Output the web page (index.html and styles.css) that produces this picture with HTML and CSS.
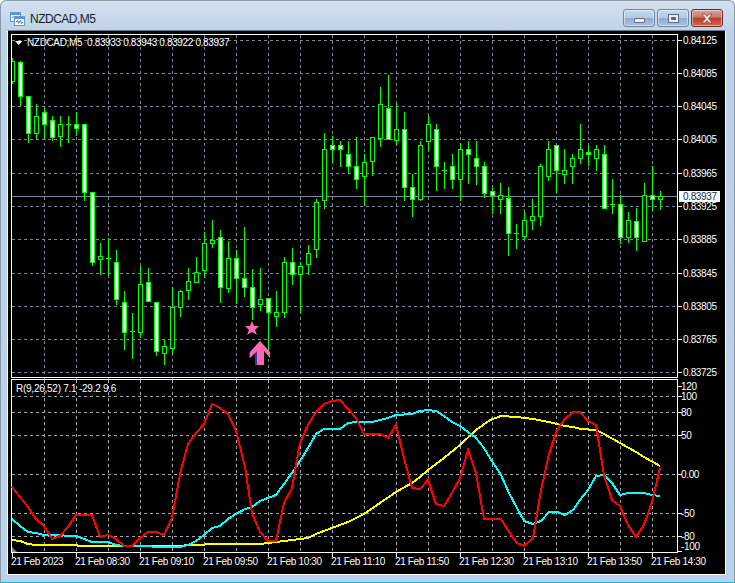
FILE: index.html
```html
<!DOCTYPE html>
<html>
<head>
	<meta charset="utf-8" />
	<title>NZDCAD,M5</title>
	<link rel="stylesheet" href="styles.css">
</head>
<body>
	<div class="window">
		<div class="titlebar">
			<svg class="app-icon" width="15" height="14" viewBox="0 0 15 14">
				<rect x="0.5" y="0.5" width="10" height="9" fill="#e8f1fb" stroke="#6f96c8"/>
				<rect x="1" y="1" width="9" height="2" fill="#5b93d6"/>
				<path d="M2 6l2-2 2 2" fill="none" stroke="#7a9cc8"/>
				<rect x="4.500" y="4.500" width="10" height="9" fill="#f4f8fd" stroke="#6f96c8"/>
				<rect x="5" y="5" width="9" height="2" fill="#5b93d6"/>
				<path d="M6 10l1.500-1.500 1 3 2-3 1 3 1.500-1.500" fill="none" stroke="#4a78b5"/>
			</svg>
			<span class="title">NZDCAD,M5</span>
			<div class="buttons">
				<div class="btn btn-min"><span class="glyph-min"></span></div>
				<div class="btn btn-max"><span class="glyph-max"></span></div>
				<div class="btn btn-close">
					<svg width="14" height="11" viewBox="0 0 14 11">
						<path d="M2 1h3l2 2.500 2-2.500h3l-3.500 4.500 3.500 4.500h-3l-2-2.500-2 2.500h-3l3.500-4.500z" fill="#f4ecea" stroke="#7a3a30" stroke-width="0.7"/>
					</svg>
				</div>
			</div>
		</div>
		<div class="client">
			<svg id="chart" class="chart" width="716" height="543" viewBox="8 31 716 543">
				<g id="grid"></g>
				<g id="frames"></g>
				<g id="candles"></g>
				<polygon class="marker" points="252,321 254,326 259,326 255,330 257,335 252,332 247,335 249,330 245,326 250,326"/>
				<polygon class="marker-shadow" points="260,341 249,353 249,358 255,353 255,365 258,365 258,350"/>
				<polygon class="marker" points="260,341 270,352 270,358 264,351 264,365 257,365 257,351 250,358 250,352"/>
				<g id="lines"></g>

				<polygon class="legend-mark" points="15,41 22.500,41 18.700,45"/>
				<text class="label" x="27" y="46">NZDCAD,M5&#160; 0.83933 0.83943 0.83922 0.83937</text>
				<text class="label label-wide" x="16" y="392">R(9,26,52) 7.1 -29.2 9.6</text>

				<text class="label" x="683" y="44">0.84125</text>
				<text class="label" x="683" y="77">0.84085</text>
				<text class="label" x="683" y="110">0.84045</text>
				<text class="label" x="683" y="143">0.84005</text>
				<text class="label" x="683" y="177">0.83965</text>
				<text class="label" x="683" y="210">0.83925</text>
				<text class="label" x="683" y="243">0.83885</text>
				<text class="label" x="683" y="277">0.83845</text>
				<text class="label" x="683" y="310">0.83805</text>
				<text class="label" x="683" y="343">0.83765</text>
				<text class="label" x="683" y="376">0.83725</text>

				<rect class="price-tag" x="679" y="191" width="41" height="11"/>
				<text class="label price-text" x="683" y="200">0.83937</text>

				<text class="label" x="681" y="390">120</text>
				<text class="label" x="681" y="400">100</text>
				<text class="label" x="681" y="416">80</text>
				<text class="label" x="681" y="439">50</text>
				<text class="label" x="681" y="478">0.00</text>
				<text class="label" x="681" y="517">-50</text>
				<text class="label" x="681" y="540">-80</text>
				<text class="label" x="681" y="550">-100</text>

				<text class="label" x="11" y="565">21 Feb 2023</text>
				<text class="label" x="75" y="565">21 Feb 08:30</text>
				<text class="label" x="139" y="565">21 Feb 09:10</text>
				<text class="label" x="203" y="565">21 Feb 09:50</text>
				<text class="label" x="267" y="565">21 Feb 10:30</text>
				<text class="label" x="331" y="565">21 Feb 11:10</text>
				<text class="label" x="395" y="565">21 Feb 11:50</text>
				<text class="label" x="459" y="565">21 Feb 12:30</text>
				<text class="label" x="523" y="565">21 Feb 13:10</text>
				<text class="label" x="587" y="565">21 Feb 13:50</text>
				<text class="label" x="651" y="565">21 Feb 14:30</text>
			</svg>
		</div>
	</div>
	<script src="script.js"></script>
</body>
</html>
```
FILE: styles.css
```css
html, body{margin:0;padding:0;background:#fff;}
body{width:735px;height:583px;overflow:hidden;}

.window{
	display:flex;
	flex-direction:column;
	width:733px;
	height:581px;
	border:1px solid #8a9aa8;
	border-bottom-color:#1fb6c8;
	border-radius:6px 6px 0 0;
	background:linear-gradient(to bottom, #d3e1ee 0, #bdd3e9 30px, #b9d1ea 100%);
}
.titlebar{
	display:flex;
	align-items:center;
	flex:none;
	height:29px;
	padding:0 11px 0 9px;
}
.app-icon{flex:none;margin-top:7px;}
.title{
	margin-left:5px;
	margin-top:6px;
	font-family:"Liberation Sans", Arial, sans-serif;
	font-size:12px;
	letter-spacing:-0.5px;
	color:#1a1a2a;
}
.buttons{
	display:flex;
	gap:2px;
	margin-left:auto;
	margin-top:5px;
}
.btn{
	display:flex;
	align-items:center;
	justify-content:center;
	box-sizing:border-box;
	width:32px;
	height:18px;
	border:1px solid #71859e;
	border-radius:3px;
	box-shadow:inset 0 0 0 1px rgba(255,255,255,0.45);
	background:linear-gradient(to bottom, #c5d8ec 0, #b2cae3 50%, #8fadcf 52%, #a9c4e0 100%);
}
.btn-close{
	border-color:#6e2a24;
	background:linear-gradient(to bottom, #d9a49a 0, #c8776a 45%, #b83c2c 52%, #cf6a58 100%);
}
.glyph-min{
	display:block;
	width:11px;
	height:5px;
	margin-top:4px;
	box-sizing:border-box;
	border:1px solid #5a6a80;
	border-radius:1px;
	background:#eef2f6;
}
.glyph-max{
	display:block;
	width:11px;
	height:9px;
	box-sizing:border-box;
	border:1px solid #5a6a80;
	box-shadow:inset 0 0 0 2px #eef2f6;
	background:#5a6a80;
}
.client{
	flex:none;
	margin:0 8px 0 6px;
	height:543px;
	border-top:1px solid #6a7a8a;
	border-left:1px solid #fff;
	border-right:1px solid #fff;
	border-bottom:1px solid #fff;
	background:#000;
}
.chart{display:block;}

.label{
	font-family:"Liberation Sans", Arial, sans-serif;
	font-size:10px;
	letter-spacing:-0.35px;
	fill:#fff;
}
.label-wide{letter-spacing:-0.25px;}
.price-tag{fill:#fff;}
.price-text{fill:#1a2a4a;}
.legend-mark{fill:#fff;}
.marker{fill:#ff69b4;}
.marker-shadow{fill:#3a3a9a;}
```
FILE: script.js
```js
var NS = 'http://www.w3.org/2000/svg';

// high, low, body top, body bottom, filled (1) or hollow (0); x = 12 + 8 * index
var bars = [
	[58,83,61,81,0],[61,105,62,96,1],[96,142,96,133,1],[104,139,116,133,0],[108,139,112,124,1],
	[116,140,120,137,1],[116,146,124,136,0],[116,142,124,124,0],[112,135,124,128,1],[124,200,124,192,1],
	[192,265,192,262,1],[243,274,256,259,0],[238,275,258,258,0],[250,304,262,299,1],[291,349,302,332,1],
	[313,358,331,331,0],[266,337,284,332,0],[268,301,282,301,1],[302,355,302,351,1],[340,364,346,353,0],
	[287,353,307,348,0],[290,316,291,307,0],[268,299,281,290,0],[257,282,272,282,0],[232,277,243,270,0],
	[220,247,240,243,0],[230,302,237,287,1],[241,292,258,288,0],[250,303,258,278,1],[227,296,278,287,1],
	[269,319,287,307,1],[268,310,299,304,0],[298,351,298,312,1],[291,326,312,316,0],[257,317,262,312,0],
	[248,284,262,274,1],[262,312,266,274,0],[245,274,253,264,0],[199,257,202,249,0],[133,208,149,200,0],
	[136,162,145,149,1],[141,166,145,149,1],[141,173,154,166,1],[137,188,166,179,1],[154,205,162,176,0],
	[137,175,137,161,0],[87,146,104,138,0],[75,139,108,139,1],[104,144,129,140,0],[112,200,129,187,1],
	[174,216,187,199,1],[141,200,145,199,0],[116,150,124,141,0],[124,190,129,166,1],[162,188,170,170,0],
	[154,188,166,179,1],[143,200,149,179,0],[141,183,149,154,1],[141,184,158,166,1],[162,197,166,193,1],
	[187,213,191,195,1],[183,213,195,199,0],[187,255,198,233,1],[224,248,233,233,0],[212,239,220,236,0],
	[199,229,216,220,0],[164,225,166,216,0],[141,180,149,176,0],[145,192,145,170,1],[149,183,170,174,0],
	[154,183,158,166,0],[124,163,149,158,0],[145,165,152,154,1],[145,170,149,158,0],[145,208,154,208,1],
	[179,213,204,204,0],[195,243,204,237,1],[212,242,220,237,0],[208,250,221,237,1],[183,241,195,241,0],
	[166,210,195,199,1],[191,209,196,199,0]
];

// indicator lines: x, y in page pixels
var red = [[12,487],[20,497],[28,507],[36,519],[44,526],[52,539],[60,536],[68,527],[76,515],[92,515],[100,537],[108,535],[116,539],[124,546],[132,546],[140,538],[148,532],[156,532],[164,535],[172,518],[180,474],[188,444],[196,433],[204,424],[212,404],[220,408],[228,414],[236,431],[245,467],[252,513],[260,532],[268,541],[276,541],[284,503],[292,488],[300,443],[308,425],[316,412],[324,404],[332,401],[340,400],[348,409],[356,418],[364,434],[380,434],[388,438],[396,425],[404,458],[412,488],[420,489],[428,480],[436,504],[444,506],[452,493],[460,478],[468,450],[476,473],[484,519],[501,519],[509,532],[517,543],[524,546],[533,538],[541,490],[549,454],[557,430],[565,419],[573,412],[580,412],[588,421],[596,425],[604,475],[612,500],[620,506],[628,525],[636,537],[644,525],[652,502],[660,468]];
var cyan = [[12,519],[20,526],[28,532],[36,533],[44,535],[52,535],[76,536],[84,539],[92,542],[108,542],[116,545],[124,546],[180,547],[188,545],[196,541],[204,535],[212,528],[220,526],[228,519],[236,514],[245,509],[252,507],[260,501],[268,498],[276,495],[284,484],[292,473],[300,461],[308,448],[316,434],[324,429],[340,429],[348,423],[356,422],[372,422],[380,420],[388,418],[396,415],[412,414],[420,411],[428,410],[436,411],[444,416],[452,422],[460,426],[468,432],[476,438],[484,448],[490,458],[501,475],[509,493],[517,508],[524,521],[533,524],[541,521],[549,512],[557,512],[565,515],[573,510],[580,500],[588,490],[596,476],[604,475],[612,483],[620,495],[628,493],[644,493],[652,495],[660,496]];
var yellow = [[12,540],[20,541],[28,544],[36,545],[76,545],[79,546],[180,546],[188,545],[204,545],[206,544],[245,544],[260,544],[284,541],[300,539],[308,538],[316,534],[332,528],[348,522],[364,514],[380,503],[396,492],[412,483],[420,477],[428,470],[444,458],[460,445],[476,430],[490,420],[501,416],[517,417],[533,419],[549,422],[565,426],[573,427],[581,429],[596,430],[604,434],[620,443],[636,452],[644,457],[660,466]];

function el(name, attrs, parent){
	var node = document.createElementNS(NS, name);
	for(var a in attrs){
		node.setAttribute(a, attrs[a]);
	}
	parent.appendChild(node);
	return node;
}

function rect(x, y, w, h, fill, parent){
	return el('rect', {x:x, y:y, width:w, height:h, fill:fill, 'shape-rendering':'crispEdges'}, parent);
}

function dash(x1, y1, x2, y2, color, parent){
	el('line', {x1:x1, y1:y1, x2:x2, y2:y2, stroke:color, 'stroke-dasharray':'3 3', 'shape-rendering':'crispEdges'}, parent);
}

function drawGrid(){
	var grid = document.getElementById('grid');
	var mainY = [40,73,106,139,173,206,239,273,306,339,372];
	var subY = [396,412,435,474,513,536];
	var i, x;
	for(i = 0; i < mainY.length; i++){
		dash(12, mainY[i] + 0.5, 677, mainY[i] + 0.5, '#778899', grid);
		rect(678, mainY[i], 4, 1, '#fff', grid);
	}
	for(i = 0; i < subY.length; i++){
		dash(12, subY[i] + 0.5, 677, subY[i] + 0.5, '#a0a8b0', grid);
		rect(678, subY[i], 4, 1, '#fff', grid);
	}
	for(i = 1; i <= 20; i++){
		x = 12 + 32 * i + 0.5;
		dash(x, 35, x, 379, '#778899', grid);
		dash(x, 380, x, 552, '#a0a8b0', grid);
	}
	for(i = 0; i <= 10; i++){
		rect(12 + 64 * i, 553, 1, 4, '#fff', grid);
	}
	rect(678, 386, 4, 1, '#fff', grid);
	rect(678, 551, 4, 1, '#fff', grid);
}

function drawFrames(){
	var frames = document.getElementById('frames');
	rect(11, 34, 667, 1, '#fff', frames);
	rect(11, 34, 1, 344, '#fff', frames);
	rect(677, 34, 1, 344, '#fff', frames);
	rect(11, 377, 667, 1, '#fff', frames);
	rect(11, 379, 667, 1, '#fff', frames);
	rect(11, 379, 1, 174, '#fff', frames);
	rect(677, 379, 1, 174, '#fff', frames);
	rect(11, 552, 667, 1, '#fff', frames);
	el('polygon', {points:'12,547 17,552 12,552', fill:'#778899'}, frames);
}

function drawCandles(){
	var group = document.getElementById('candles');
	rect(12, 196, 665, 1, '#778899', group);
	for(var i = 0; i < bars.length; i++){
		var b = bars[i], x = 12 + 8 * i;
		rect(x, b[0], 1, b[1] - b[0] + 1, '#00ff00', group);
		if(b[2] == b[3]){
			rect(x - 2, b[2], 5, 1, '#00ff00', group);
			continue;
		}
		var left = Math.max(x - 2, 12);
		rect(left, b[2], x + 3 - left, b[3] - b[2] + 1, '#00ff00', group);
		rect(Math.max(x - 1, 12), b[2] + 1, x + 2 - Math.max(x - 1, 12), b[3] - b[2] - 1, b[4] ? '#fff' : '#000', group);
	}
}

function drawLine(points, color){
	el('polyline', {
		points:points.join(' '),
		fill:'none',
		stroke:color,
		'stroke-width':2,
		'shape-rendering':'crispEdges'
	}, document.getElementById('lines'));
}

drawGrid();
drawFrames();
drawCandles();
drawLine(yellow, '#ffff00');
drawLine(cyan, '#00ffff');
drawLine(red, '#ff0000');
```
